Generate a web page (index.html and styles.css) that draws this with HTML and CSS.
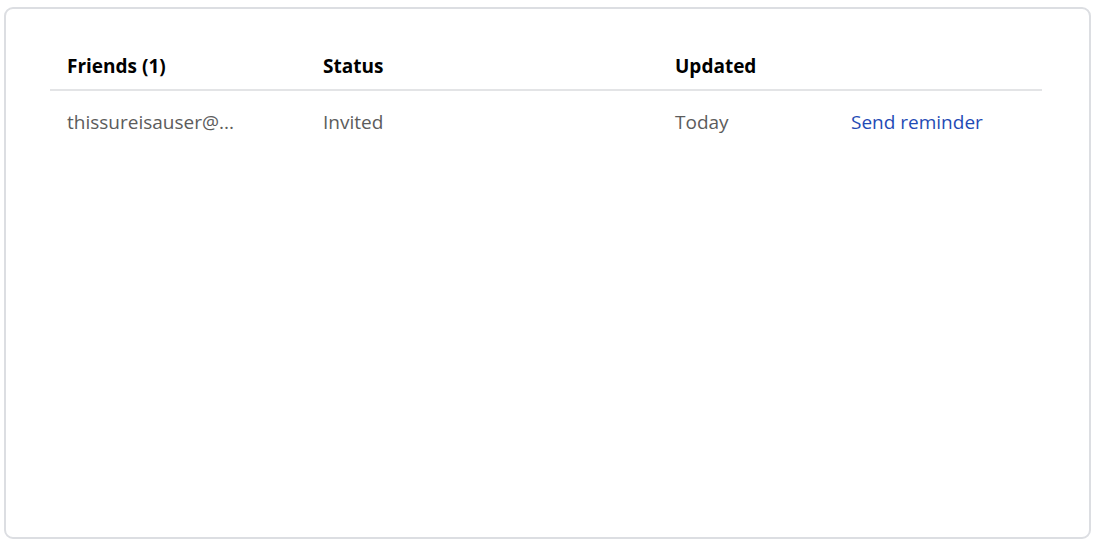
FILE: index.html
```html
<!DOCTYPE html>
<html>
<head>
<meta charset="utf-8">
<link rel="stylesheet" href="styles.css">
</head>
<body>
<div class="card">
  <table class="friends">
    <thead>
      <tr>
        <th class="c1">Friends (1)</th>
        <th class="c2">Status</th>
        <th class="c3">Updated</th>
        <th class="c4"></th>
      </tr>
    </thead>
    <tbody>
      <tr>
        <td class="email">thissureisauser@...</td>
        <td>Invited</td>
        <td>Today</td>
        <td><a class="link" href="#">Send reminder</a></td>
      </tr>
    </tbody>
  </table>
</div>
</body>
</html>
```
FILE: styles.css
```css
html, body {
  margin: 0;
  padding: 0;
  background: #fff;
}
body {
  padding: 7px 4px 5px 4px;
  font-family: "Open Sans", "Noto Sans", sans-serif;
}
.card {
  box-sizing: border-box;
  width: 1087px;
  height: 532px;
  border: 2px solid #dcdee2;
  border-radius: 9px;
  padding: 36px 47px 0 44px;
}
.friends {
  width: 992px;
  border-collapse: collapse;
  table-layout: fixed;
}
.friends th {
  text-align: left;
  font-weight: 700;
  font-size: 19px;
  color: #000;
  padding: 8px 17px 10px;
  border-bottom: 2px solid #e3e4e6;
  line-height: 26px;
}
.c1 { width: 222px; }
.c2 { width: 318px; }
.c3 { width: 142px; }
.friends td {
  font-size: 19px;
  color: #5c5c5c;
  padding: 18px 17px 17px;
  line-height: 26px;
  white-space: nowrap;
}
.link {
  color: #1f4bb5;
  text-decoration: none;
}
```
